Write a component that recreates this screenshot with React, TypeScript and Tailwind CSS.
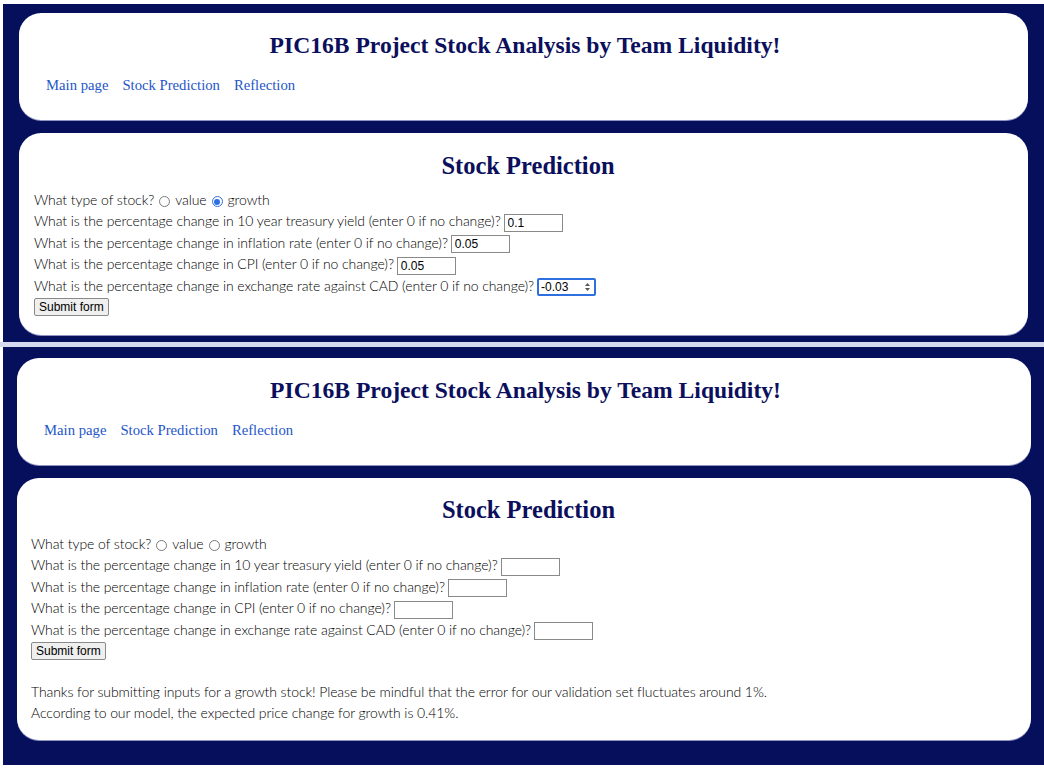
import { useState } from "react";

const rows = [
  { label: "What is the percentage change in 10 year treasury yield (enter 0 if no change)?", value: "0.1" },
  { label: "What is the percentage change in inflation rate (enter 0 if no change)?", value: "0.05" },
  { label: "What is the percentage change in CPI (enter 0 if no change)?", value: "0.05" },
  { label: "What is the percentage change in exchange rate against CAD (enter 0 if no change)?", value: "-0.03" },
];

function Header() {
  return (
    <div className="h-[107px] rounded-[22px] bg-white pt-[17px] shadow-[0_1px_0_#8f93c0]">
      <h1 className="pl-[3px] text-center font-['Liberation_Serif',serif] text-[23.6px] font-bold leading-[30px] text-[#0b0f5c]">
        PIC16B Project Stock Analysis by Team Liquidity!
      </h1>
      <nav className="mt-[15px] flex gap-[14px] px-[27px] font-['Liberation_Serif',serif] text-[14.7px] leading-[20px] text-[#2456c8]">
        <a href="#">Main page</a>
        <a href="#">Stock Prediction</a>
        <a href="#">Reflection</a>
      </nav>
    </div>
  );
}

function Spinner() {
  return (
    <svg width="7" height="10" viewBox="0 0 7 10" className="text-[#555]">
      <path d="M3.5 1 L6 4 L1 4 Z" fill="currentColor" />
      <path d="M3.5 9 L6 6 L1 6 Z" fill="currentColor" />
    </svg>
  );
}

function Field({ value, focused }: { value: string; focused: boolean }) {
  if (focused) {
    return (
      <span className="ml-[3px] inline-flex h-[18px] w-[59px] items-center justify-between rounded-[2px] border-2 border-[#2f6fe0] bg-white pl-[2px] pr-[3px] align-middle font-['Liberation_Sans',sans-serif] text-[12px] leading-none tracking-normal text-black">
        {value}
        <Spinner />
      </span>
    );
  }
  return (
    <input
      readOnly
      value={value}
      className="ml-[3px] h-[18px] w-[59px] border border-[#8a8a8a] bg-white px-[3px] align-middle font-['Liberation_Sans',sans-serif] text-[12px] leading-none tracking-normal text-black outline-none"
    />
  );
}

function Radio({ checked }: { checked: boolean }) {
  return (
    <span
      className={
        checked
          ? "mx-[5px] inline-flex h-[11px] w-[11px] items-center justify-center rounded-full border border-[#2f6fe0] bg-white align-middle"
          : "mx-[5px] inline-block h-[11px] w-[11px] rounded-full border border-[#7a7a7a] bg-white align-middle"
      }
    >
      {checked && <span className="h-[6px] w-[6px] rounded-full bg-[#2f6fe0]" />}
    </span>
  );
}

function PredictionCard({ filled, result }: { filled: boolean; result: boolean }) {
  const [growth] = useState(filled);
  return (
    <div
      className={
        result
          ? "h-[262px] rounded-[22px] bg-white px-[14px] pt-[18px] shadow-[0_1px_0_#8f93c0]"
          : "h-[202px] rounded-[22px] bg-white px-[15px] pt-[19px] shadow-[0_1px_0_#8f93c0]"
      }
    >
      <h2 className="pl-[9px] text-center font-['Liberation_Serif',serif] text-[24.5px] font-bold leading-[28px] text-[#0b0f5c]">
        Stock Prediction
      </h2>
      <div className="mt-[9px] font-['Lato',sans-serif] text-[14px] font-light leading-[21.4px] tracking-[-0.08px] text-black">
        <div>
          What type of stock?
          <Radio checked={false} />
          value
          <Radio checked={growth} />
          growth
        </div>
        {rows.map((r, i) => (
          <div key={r.label}>
            {r.label}
            <Field value={filled ? r.value : ""} focused={filled && i === 3} />
          </div>
        ))}
        <div className="pt-[2px]">
          <button className="h-[18px] rounded-[2px] border border-[#8a8a8a] bg-[#efefef] px-[4px] align-top font-['Liberation_Sans',sans-serif] text-[12px] leading-none tracking-normal text-black">
            Submit form
          </button>
        </div>
        {result && (
          <div className="mt-[17px]">
            <p>
              Thanks for submitting inputs for a growth stock! Please be mindful that the error for our validation set
              fluctuates around 1%.
            </p>
            <p>According to our model, the expected price change for growth is 0.41%.</p>
          </div>
        )}
      </div>
    </div>
  );
}

export default function App() {
  return (
    <div className="h-[770px] w-[1044px] overflow-hidden bg-white pt-[4px]">
      <div className="ml-[3px] flex h-[338px] flex-col gap-[13px] bg-[#060f5c] pl-[16px] pr-[16px] pt-[9px]">
        <Header />
        <PredictionCard filled={true} result={false} />
      </div>
      <div className="h-[5px] bg-[#d5d8ee]" />
      <div className="ml-[3px] flex h-[418px] flex-col gap-[13px] bg-[#060f5c] pl-[14px] pr-[13px] pt-[11px]">
        <Header />
        <PredictionCard filled={false} result={true} />
      </div>
    </div>
  );
}
